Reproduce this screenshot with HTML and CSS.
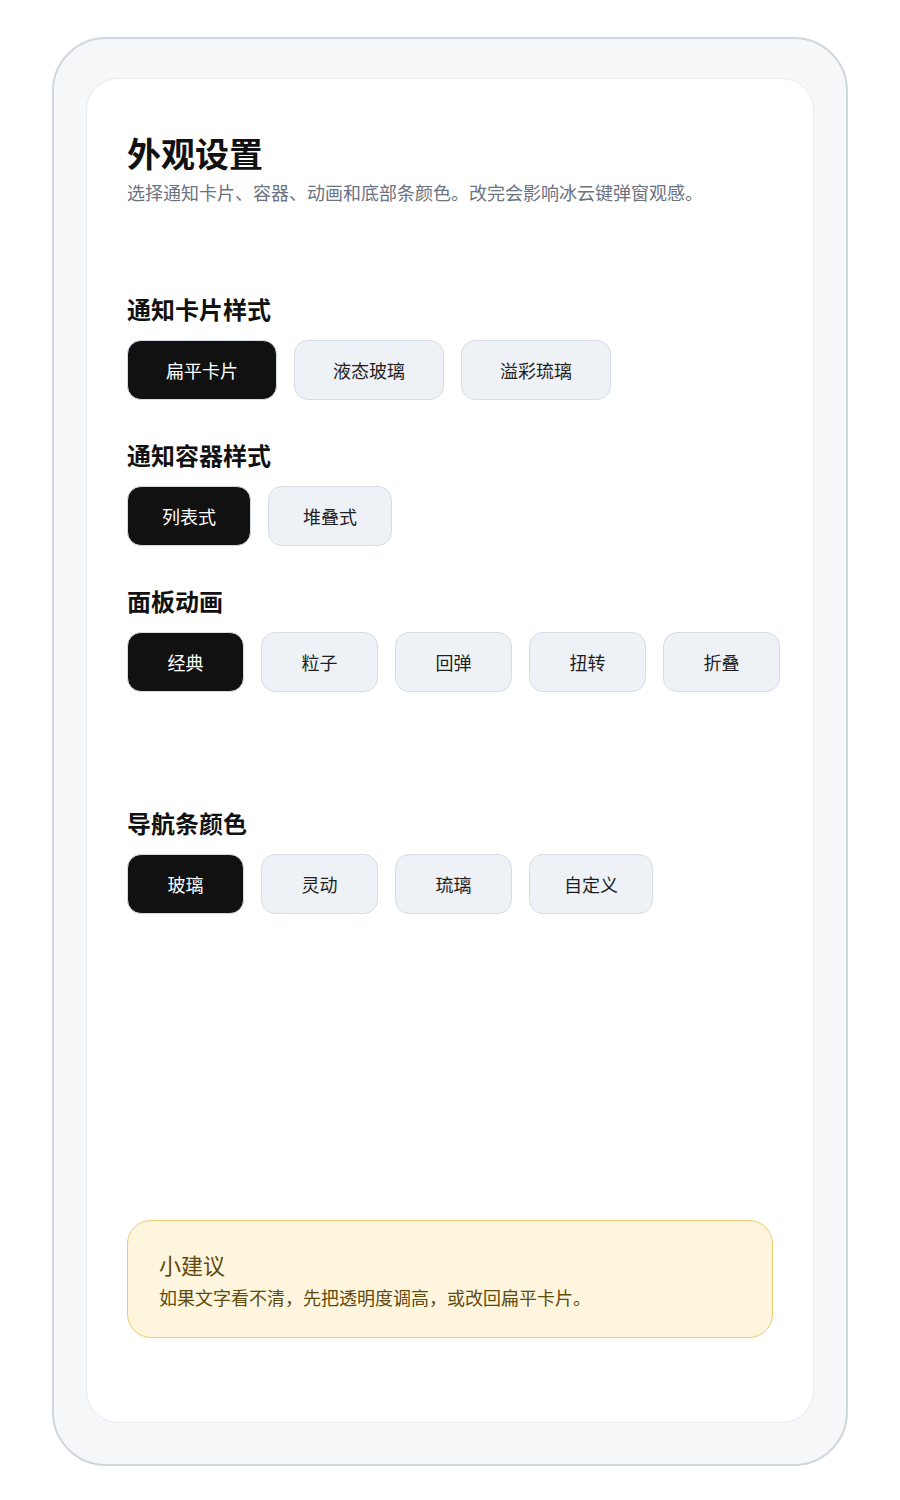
FILE: index.html
```html
<!DOCTYPE html>
<html lang="zh-CN">

<head>
    <meta charset="UTF-8">
    <title>外观设置</title>

    <link rel="stylesheet" href="styles.css">
</head>

<body>
    <div class="frame">
        <div class="panel">
            <h1 class="title">外观设置</h1>
            <p class="subtitle">选择通知卡片、容器、动画和底部条颜色。改完会影响冰云键弹窗观感。</p>

            <div class="section section-first">
                <h2>通知卡片样式</h2>
                <div class="chips chips-wide">
                    <button class="chip active">扁平卡片</button>
                    <button class="chip">液态玻璃</button>
                    <button class="chip">溢彩琉璃</button>
                </div>
            </div>

            <div class="section">
                <h2>通知容器样式</h2>
                <div class="chips">
                    <button class="chip active">列表式</button>
                    <button class="chip">堆叠式</button>
                </div>
            </div>

            <div class="section">
                <h2>面板动画</h2>
                <div class="chips">
                    <button class="chip active">经典</button>
                    <button class="chip">粒子</button>
                    <button class="chip">回弹</button>
                    <button class="chip">扭转</button>
                    <button class="chip">折叠</button>
                </div>
            </div>

            <div class="section section-nav">
                <h2>导航条颜色</h2>
                <div class="chips">
                    <button class="chip active">玻璃</button>
                    <button class="chip">灵动</button>
                    <button class="chip">琉璃</button>
                    <button class="chip">自定义</button>
                </div>
            </div>

            <div class="tip">
                <div class="tip-title">小建议</div>
                <div class="tip-text">如果文字看不清，先把透明度调高，或改回扁平卡片。</div>
            </div>
        </div>
    </div>

    <script>
        document.querySelectorAll('.chips').forEach(group => {
            group.addEventListener('click', e => {
                const chip = e.target.closest('.chip');
                if (!chip) return;
                group.querySelectorAll('.chip').forEach(c => c.classList.toggle('active', c === chip));
            });
        });
    </script>
</body>

</html>
```

FILE: styles.css
```css
body {
    font-family: "Noto Sans CJK SC", "Noto Sans", sans-serif;
    background-color: #fff;
    color: #111;
    margin: 0;
    padding: 37px 52px 36px;
}

.frame {
    background-color: #f6f7f9;
    border: 2px solid #cfd6e0;
    border-radius: 54px;
    padding: 39px 32px 41px;
}

.panel {
    background-color: #fff;
    border: 1px solid #e8eaee;
    border-radius: 32px;
    padding: 53px 40px 84px;
}

.title {
    font-size: 34px;
    line-height: 41px;
    font-weight: 700;
    margin: 0;
}

.subtitle {
    font-size: 18px;
    line-height: 28px;
    color: #6b7280;
    margin: 5px 0 0;
}

.section {
    margin-top: 40px;
}

.section-first {
    margin-top: 88px;
}

.section-nav {
    margin-top: 116px;
}

.section h2 {
    font-size: 24px;
    line-height: 30px;
    font-weight: 700;
    margin: 0 0 16px;
}

.chips {
    display: flex;
    gap: 17px;
}

.chip {
    font-family: inherit;
    font-size: 18px;
    height: 60px;
    min-width: 117px;
    padding: 0 34px;
    border: 1.5px solid #d6dce6;
    border-radius: 14px;
    background-color: #eef1f6;
    color: #1f1f1f;
    cursor: pointer;
}

.chips-wide .chip {
    min-width: 150px;
}

.chip.active {
    background-color: #111;
    color: #fff;
}

.tip {
    margin-top: 306px;
    background-color: #fdf5dd;
    border: 1.5px solid #ebcc6f;
    border-radius: 24px;
    padding: 28px 31px 26px;
    color: #624a0c;
}

.tip-title {
    font-size: 22px;
    line-height: 30px;
}

.tip-text {
    font-size: 18px;
    line-height: 27px;
    margin-top: 5px;
}
```
